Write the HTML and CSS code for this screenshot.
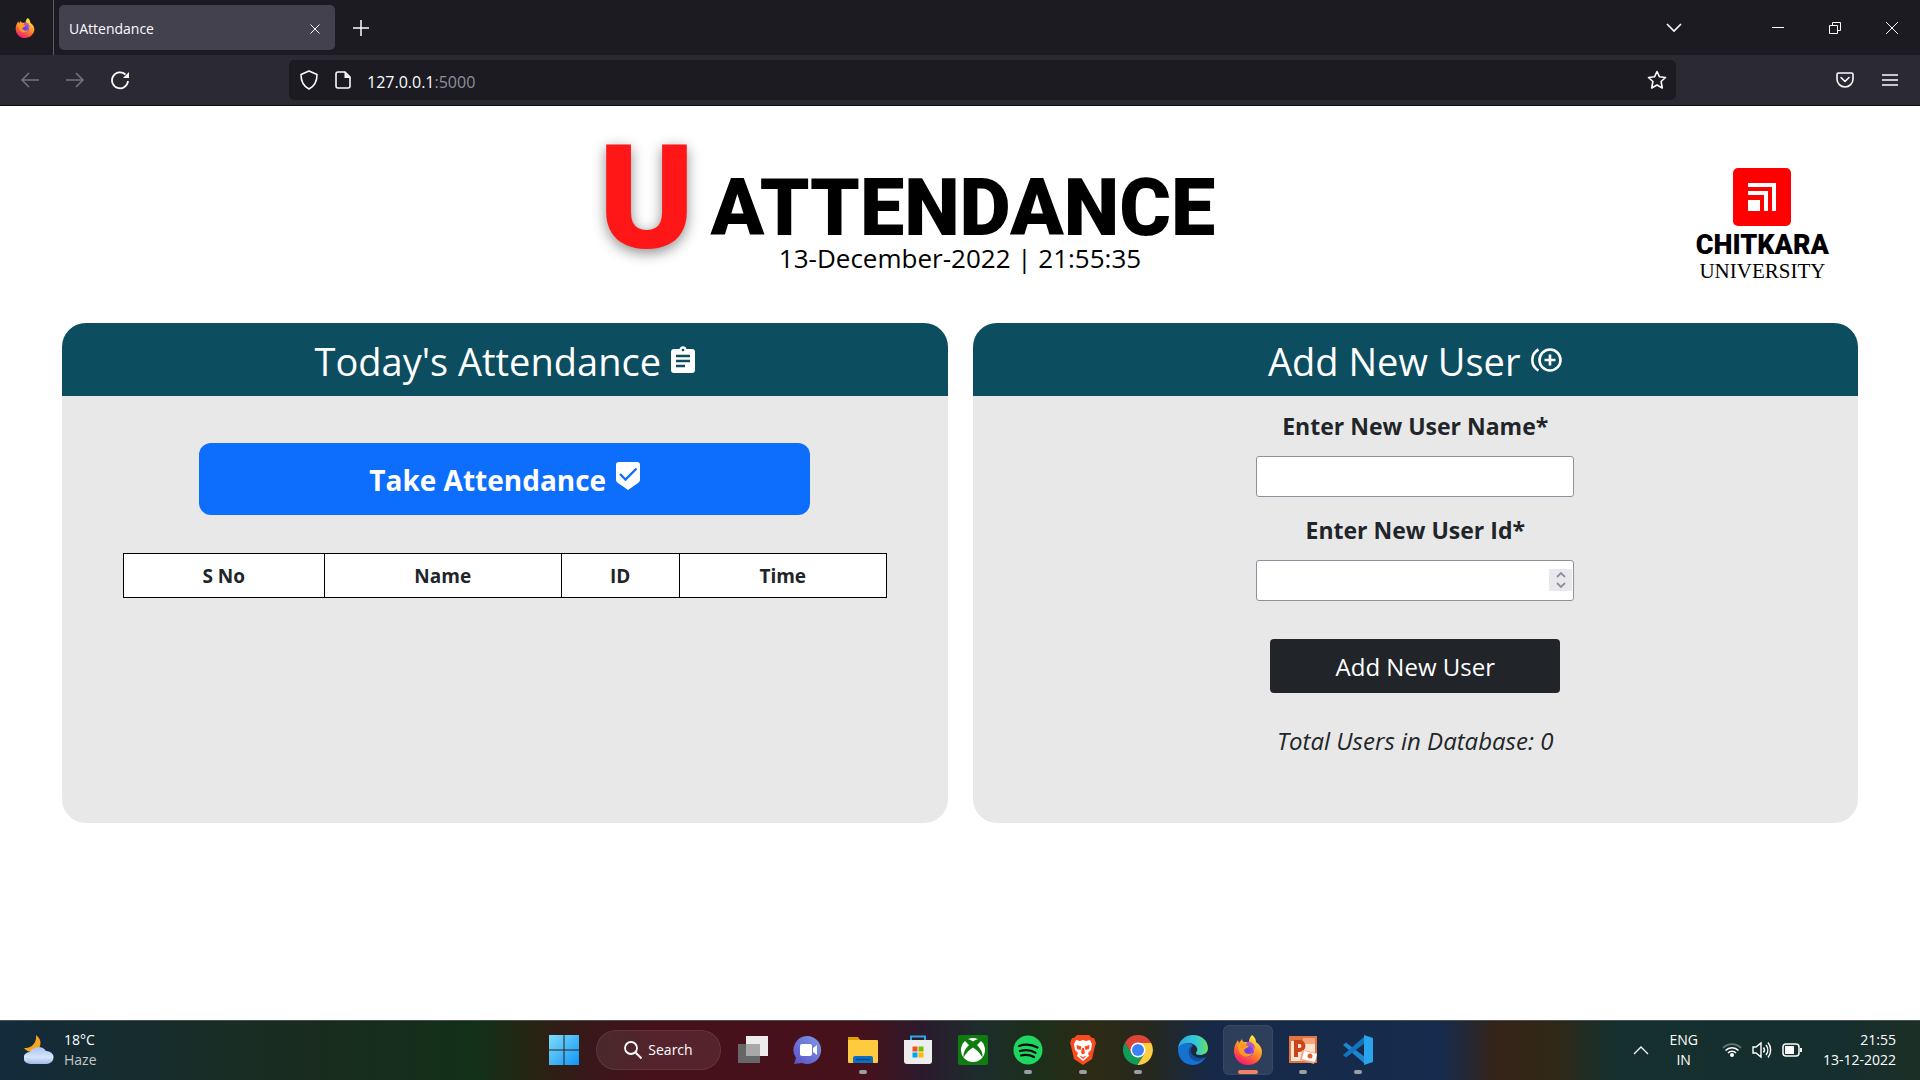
FILE: index.html
```html
<!DOCTYPE html>
<html lang="en">
<head>
<meta charset="utf-8">
<title>UAttendance</title>
<link rel="stylesheet" href="styles.css">
</head>
<body>
<svg class="defs" aria-hidden="true">
  <defs>
    <linearGradient id="fx-body" x1=".8" y1="0" x2=".3" y2="1"><stop offset="0" stop-color="#fff44f"/><stop offset=".35" stop-color="#ffb02e"/><stop offset=".65" stop-color="#ff6a2e"/><stop offset="1" stop-color="#f0137a"/></linearGradient>
    <radialGradient id="fx-globe"><stop offset="0" stop-color="#5b3fd6"/><stop offset="1" stop-color="#a04be8"/></radialGradient>
    <linearGradient id="win" x1="0" y1="0" x2="1" y2="1"><stop offset="0" stop-color="#7fdcfb"/><stop offset="1" stop-color="#0f96f5"/></linearGradient>
    <linearGradient id="cloud" x1="0" y1="0" x2="0" y2="1"><stop offset="0" stop-color="#a9c4f5"/><stop offset=".6" stop-color="#d7e4fb"/><stop offset="1" stop-color="#9db9ea"/></linearGradient>
    <linearGradient id="edge-a" x1="0" y1="0" x2="1" y2="0"><stop offset="0" stop-color="#2aa5e8"/><stop offset=".6" stop-color="#35c8d8"/><stop offset="1" stop-color="#6be05a"/></linearGradient>
    <linearGradient id="chat" x1="0" y1="1" x2="1" y2="0"><stop offset="0" stop-color="#5a4fc4"/><stop offset="1" stop-color="#7d9be8"/></linearGradient>
    <symbol id="firefox" viewBox="0 0 30 30">
      <path fill="url(#fx-body)" d="M19 0c3 2 4 5 4 7 4 3 6 6 6 10 0 7-6 13-14 13S1 24 1 16C1 11 3 8 5 5l1 3 3-4c0 2 1 3 3 3h4c0-3 1-5 3-7z"/>
      <circle cx="15" cy="16" r="6" fill="url(#fx-globe)"/>
      <path fill="#ff9a25" d="M4 10c3-2 6-2 8-1l4 1c0 3-4 3-5 5 0 4 5 5 9 3-2 5-12 5-14-2-1-3-1-4-2-6z"/>
      <path fill="#9b3fe0" d="M14 7c4-1 8 2 8 7-2-2-4-3-7-3l-2-1z" opacity=".75"/>
    </symbol>
  </defs>
</svg>

<header class="chrome">
  <div class="tabs">
    <div class="pinned"><svg width="20" height="20"><use href="#firefox"/></svg></div>
    <div class="tab"><span>UAttendance</span>
      <button class="icon-btn" aria-label="Close tab"><svg width="10" height="10" viewBox="0 0 10 10"><path d="M.5.5l9 9M9.500.5l-9 9"/></svg></button>
    </div>
    <button class="icon-btn new-tab" aria-label="New tab"><svg width="16" height="16" viewBox="0 0 16 16"><path d="M8 0v16M0 8h16" stroke-width="1.500"/></svg></button>
    <div class="window-buttons">
      <button class="icon-btn list-tabs" aria-label="List all tabs"><svg width="16" height="10" viewBox="0 0 16 10"><path d="M1 1l7 7 7-7" stroke-width="1.600"/></svg></button>
      <button class="icon-btn" aria-label="Minimize"><svg width="12" height="12" viewBox="0 0 12 12"><path d="M0 5.500h12"/></svg></button>
      <button class="icon-btn" aria-label="Restore"><svg width="12" height="12" viewBox="0 0 12 12"><path d="M.5 3.500h8v8h-8zM3.500 3V.5h8v8H9"/></svg></button>
      <button class="icon-btn" aria-label="Close"><svg width="14" height="14" viewBox="0 0 14 14"><path d="M1 1l12 12M13 1L1 13"/></svg></button>
    </div>
  </div>
  <div class="toolbar">
    <div class="nav">
      <button class="icon-btn dim" aria-label="Back"><svg width="18" height="16" viewBox="0 0 18 16"><path d="M18 8H1M8 1L1 8l7 7" stroke-width="1.500"/></svg></button>
      <button class="icon-btn dim" aria-label="Forward"><svg width="18" height="16" viewBox="0 0 18 16"><path d="M0 8h17M10 1l7 7-7 7" stroke-width="1.500"/></svg></button>
      <button class="icon-btn" aria-label="Reload"><svg width="20" height="20" viewBox="0 0 20 20"><path d="M15.500 4.500A8 8 0 1 0 18 11" stroke-width="1.800"/><path d="M19 2v6h-6z" fill="#fbfbfe" stroke="none"/></svg></button>
    </div>
    <div class="urlbar">
      <svg width="20" height="20" viewBox="0 0 20 20"><path d="M10 1l8 3.500c0 7-2 11.500-8 14.500C4 16 2 11.500 2 4.500z" stroke-width="1.600" stroke-linejoin="round"/></svg>
      <svg width="16" height="18" viewBox="0 0 16 18"><path d="M3 1h7l5 5v9a2 2 0 0 1-2 2H3a2 2 0 0 1-2-2V3a2 2 0 0 1 2-2z" stroke-width="1.600"/><path d="M9.500 1v6h6z" fill="#fbfbfe" stroke="none"/></svg>
      <span class="url">127.0.0.1<span class="port">:5000</span></span>
      <button class="icon-btn star" aria-label="Bookmark"><svg width="20" height="20" viewBox="0 0 20 20"><path d="M10 1.500l2.500 5.300 6 .7-4.400 4 1.200 6.500-5.300-3-5.300 3 1.200-6.500-4.400-4 6-.7z" stroke-width="1.600" stroke-linejoin="round"/></svg></button>
    </div>
    <div class="tools">
      <button class="icon-btn" aria-label="Pocket"><svg width="18" height="16" viewBox="0 0 18 16"><path d="M2.500 1h13A1.500 1.500 0 0 1 17 2.500V7a8 8 0 0 1-16 0V2.500A1.500 1.500 0 0 1 2.500 1zM5 5.500l4 4 4-4" stroke-width="1.600" stroke-linejoin="round" stroke-linecap="round"/></svg></button>
      <button class="icon-btn" aria-label="Menu"><svg width="16" height="14" viewBox="0 0 16 14"><path d="M0 2h16M0 7h16M0 12h16" stroke-width="1.600"/></svg></button>
    </div>
  </div>
</header>

<main class="page">
  <div class="masthead">
    <div class="brand">
      <h1 class="logo"><span class="logo-u">U</span><span class="logo-word">ATTENDANCE</span></h1>
      <p class="date">13-December-2022 | 21:55:35</p>
    </div>
    <div class="university">
      <svg width="58" height="58" viewBox="0 0 58 58"><rect width="58" height="58" rx="5" fill="#fe0000"/><g fill="#fff"><path d="M15 32h12v11H15zM15 23h20v20h-4V27H15zM15 15h28v28h-4V19H15z"/></g></svg>
      <span class="uni-name">CHITKARA</span>
      <span class="uni-kind">UNIVERSITY</span>
    </div>
  </div>

  <div class="cards">
    <section class="card">
      <h2>Today's Attendance
        <svg width="24" height="28" viewBox="0 0 24 28"><path fill="#fff" d="M3 3h5.500a3.600 3.600 0 0 1 7 0H21a3 3 0 0 1 3 3v18a3 3 0 0 1-3 3H3a3 3 0 0 1-3-3V6a3 3 0 0 1 3-3z"/><circle cx="12" cy="4" r="1.300" fill="#0c4d60"/><path d="M5 10h14M5 15h14M5 20h9" stroke="#0c4d60" stroke-width="2.500"/></svg>
      </h2>
      <div class="attendance">
        <button class="take">Take Attendance
          <svg width="24" height="28" viewBox="0 0 24 28"><path fill="#fff" d="M3 0h18a3 3 0 0 1 3 3v15a4 4 0 0 1-2 3l-10 7-10-7a4 4 0 0 1-2-3V3a3 3 0 0 1 3-3z"/><path d="M4 12l5.500 5.500L20.500 6.500" stroke="#0d6efd" stroke-width="2.300"/></svg>
        </button>
        <table>
          <colgroup><col class="c-no"><col class="c-name"><col class="c-id"><col class="c-time"></colgroup>
          <thead><tr><th>S No</th><th>Name</th><th>ID</th><th>Time</th></tr></thead>
        </table>
      </div>
    </section>

    <section class="card">
      <h2>Add New User
        <svg width="32" height="24" viewBox="0 0 32 24"><circle cx="20" cy="12" r="10.500" stroke="#fff" stroke-width="2.600"/><path d="M20 6.500v11M14.500 12h11M8.500 1.500a12 12 0 0 0 0 21" stroke="#fff" stroke-width="2.600"/></svg>
      </h2>
      <form class="new-user">
        <label for="username">Enter New User Name*</label>
        <input id="username" type="text">
        <label for="userid">Enter New User Id*</label>
        <div class="number">
          <input id="userid" type="number">
          <span class="spinner"><svg width="10" height="16" viewBox="0 0 10 16"><path d="M1 5l4-4 4 4M1 11l4 4 4-4" stroke="#8f8f9d" stroke-width="1.800"/></svg></span>
        </div>
        <button type="button">Add New User</button>
        <p>Total Users in Database: 0</p>
      </form>
    </section>
  </div>
</main>

<footer class="taskbar">
  <div class="weather">
    <svg width="30" height="30" viewBox="0 0 30 30"><path fill="#f7a51e" d="M12 0c6 4 6 12 0 16-4 2-9 1-12-3 7 1 13-5 12-13z"/><path fill="url(#cloud)" d="M7 29a7 6 0 0 1-1-12 9 8 0 0 1 16-1 7 6.500 0 0 1 1 13z"/></svg>
    <div><span>18°C</span><span class="muted">Haze</span></div>
  </div>
  <nav class="apps">
    <button class="app" aria-label="Start"><svg width="30" height="30" viewBox="0 0 30 30"><path fill="url(#win)" d="M0 0h14.500v14.500H0zM15.500 0H30v14.500H15.500zM0 15.500h14.500V30H0zM15.500 15.500H30V30H15.500z"/></svg></button>
    <button class="search"><svg width="18" height="18" viewBox="0 0 18 18"><circle cx="7" cy="7" r="6" stroke="#fff" stroke-width="1.800"/><path d="M11.500 11.500l6 6" stroke="#fff" stroke-width="2"/></svg>Search</button>
    <button class="app" aria-label="Task view"><svg width="30" height="30" viewBox="0 0 30 30"><path fill="#666" d="M0 9h22v19H0z"/><path fill="#ececec" d="M8 1h22v20H8z"/><path fill="#a8a8a8" d="M8 9h14v12H8z"/></svg></button>
    <button class="app" aria-label="Chat"><svg width="30" height="30" viewBox="0 0 30 30"><path fill="url(#chat)" d="M15 1a14 14 0 1 1-6 27l-8 1 2-6A14 14 0 0 1 15 1z"/><rect x="7" y="9" width="12" height="12" rx="2" fill="#fff"/><path fill="#fff" d="M20 13l4-3v10l-4-3z"/></svg></button>
    <button class="app open" aria-label="File Explorer"><svg width="30" height="30" viewBox="0 0 30 30"><path fill="#dfa100" d="M0 2h10l3 4v6H0z"/><rect y="5" width="30" height="23" rx="1" fill="#fdcb3d"/><path fill="#0d6fc4" d="M5 28v-5a2 2 0 0 1 2-2h16a2 2 0 0 1 2 2v5z"/><path stroke="#0a4a85" stroke-width="1.500" d="M8 24.500h14"/></svg></button>
    <button class="app" aria-label="Store"><svg width="30" height="30" viewBox="0 0 30 30"><path d="M8 6V1.500h14V6" stroke="#29a9e8" stroke-width="2"/><path fill="#ededed" d="M1 5h28v21a3 3 0 0 1-3 3H4a3 3 0 0 1-3-3z"/><path fill="#f25022" d="M9.500 11.500h5v5h-5z"/><path fill="#7fba00" d="M15.500 11.500h5v5h-5z"/><path fill="#00a4ef" d="M9.500 17.500h5v5h-5z"/><path fill="#ffb900" d="M15.500 17.500h5v5h-5z"/></svg></button>
    <button class="app" aria-label="Xbox"><svg width="30" height="30" viewBox="0 0 30 30"><rect width="30" height="30" rx="2" fill="#107c10"/><circle cx="15" cy="15" r="12" fill="#fff"/><path fill="#107c10" d="M6 5l3-1c2 0 4 1 6 2.500C17 5 19 4 21 4l3 1-5 5c4 4 6 8 5.500 12.500C22 18 19 15 15 12.500 11 15 8 18 5.500 22.500 5 18 7 14 11 10z"/></svg></button>
    <button class="app open" aria-label="Spotify"><svg width="30" height="30" viewBox="0 0 30 30"><circle cx="15" cy="15" r="14.500" fill="#1ed760"/><path d="M6 11c6-2 13-1.500 18.500 1.500M7 16c5-1.500 11-1 15.500 1.700M8 20.500c4-1 9-.7 13 1.500" stroke="#0b0b0b" stroke-width="2.300" stroke-linecap="round"/></svg></button>
    <button class="app open" aria-label="Brave"><svg width="30" height="30" viewBox="0 0 30 30"><path fill="#fb4a1f" d="M9 0h12l3 3h2l2 5-1 3-3 13-9 6-9-6L3 11 2 8l2-5h2z"/><path fill="#fff" d="M15 5l3 1 4-1 2 4-1 6-3 3 1 3-6 5-6-5 1-3-3-3-1-6 2-4 4 1z"/><path fill="#fb4a1f" d="M8.500 10l5 1.500L12.500 15 9 14zM21.500 10l-5 1.500 1 3.500 3.500-1zM14 13h2l1 5-2 1.500-2-1.500zM11 20.500l4 1.500 4-1.500-4 3.500z"/></svg></button>
    <button class="app open" aria-label="Chrome"><svg width="30" height="30" viewBox="0 0 30 30"><path fill="#db4437" d="M2 7.500a15 15 0 0 1 26 0V8H15l-6.500 11z"/><path fill="#0f9d58" d="M2 7.500a15 15 0 0 0 12.500 22.500L21 19l-12.500 0z"/><path fill="#ffcd40" d="M28.200 8a15 15 0 0 1-13.700 22L21.500 18.500 15 8z"/><circle cx="15" cy="15" r="7.500" fill="#fff"/><circle cx="15" cy="15" r="6" fill="#3b82f6"/></svg></button>
    <button class="app" aria-label="Edge"><svg width="30" height="30" viewBox="0 0 30 30"><path fill="#1573cf" d="M0 15c1-5 5-7 9-7 3 0 5 1 6 3-4 1-5 5-3 9 3 5 10 5 16 2-3 5-8 8-13 8C7 30 0 24 0 15z"/><path fill="url(#edge-a)" d="M0 15C0 6 7 0 15 0c9 0 15 6 15 13 0 5-4 7-8 7-3 0-4-1-4-2s2-2 1-5c-1-3-5-5-9-5C5 8 1 10 0 15z"/><path fill="#0f4f9e" d="M12 12c-3 5-1 12 5 14 4 1 8-1 11-4-5 2-11 1-14-3-2-3-1-5 0-7z"/></svg></button>
    <button class="app open current" aria-label="Firefox"><svg width="30" height="30"><use href="#firefox"/></svg></button>
    <button class="app open" aria-label="PowerPoint"><svg width="30" height="30" viewBox="0 0 30 30"><path fill="#e3743f" d="M1 1h28v27H1z"/><path fill="#fbe3d2" d="M3 6h24v20H3z"/><path fill="#f3a67c" d="M15 3h12v6H15z"/><path d="M8 22V7h3.500a3.500 3.500 0 0 1 0 8H8" stroke="#c8441b" stroke-width="4"/><path fill="#f0a680" d="M14 15l15 3-3 11-14-4z"/><path fill="#fff" d="M16 16l13 3-2 8-13-3z"/><circle cx="22" cy="21" r="2.500" fill="#e06030"/></svg></button>
    <button class="app open" aria-label="Visual Studio Code"><svg width="30" height="30" viewBox="0 0 30 30"><path fill="#1c86cf" d="M0 10l3-2.500L22 22v7z"/><path fill="#1474bb" d="M0 20l3 2.500L22 8V1z"/><path fill="#2ba4ee" d="M21 0l9 3v24l-9 3z"/></svg></button>
  </nav>
  <div class="tray">
    <button class="icon-btn" aria-label="Show hidden icons"><svg width="16" height="10" viewBox="0 0 16 10"><path d="M1 9l7-7 7 7" stroke-width="1.300"/></svg></button>
    <div class="lang"><span>ENG</span><span>IN</span></div>
    <div class="status">
      <svg width="20" height="16" viewBox="0 0 20 16"><path d="M1 6a12.500 12.500 0 0 1 18 0" stroke="#fff" stroke-opacity=".35" stroke-width="1.600"/><path d="M3.500 8.500a9 9 0 0 1 13 0M6 11a5.500 5.500 0 0 1 8 0" stroke="#fff" stroke-width="1.600"/><circle cx="10" cy="13" r="2" fill="#fff"/></svg>
      <svg width="20" height="18" viewBox="0 0 20 18"><path d="M1 6h3l5-4v14l-5-4H1zM11.500 6.500a4 4 0 0 1 0 5M14 4a8 8 0 0 1 0 10M16 1.500a12 12 0 0 1 0 15" stroke="#fff" stroke-width="1.400"/></svg>
      <svg width="20" height="14" viewBox="0 0 20 14"><rect x="1" y="1" width="16" height="12" rx="3" stroke="#fff" stroke-width="1.500"/><path fill="#fff" d="M3 3h9v8H3zM18 5h2v4h-2z"/></svg>
    </div>
    <div class="clock"><span>21:55</span><span>13-12-2022</span></div>
  </div>
</footer>
</body>
</html>
```
FILE: styles.css
```css
* { box-sizing: border-box; }

body {
  margin: 0;
  min-height: 100vh;
  display: flex;
  flex-direction: column;
  background: #fff;
  color: #212529;
  font-family: "Open Sans", "Noto Sans", sans-serif;
}

h1, h2, p { margin: 0; font-weight: 400; }
button, input { font-family: inherit; }
svg { display: block; fill: none; flex: none; }
.defs { position: absolute; width: 0; height: 0; }

.icon-btn {
  display: flex;
  align-items: center;
  justify-content: center;
  padding: 0;
  border: 0;
  background: none;
}
.icon-btn svg, .urlbar svg { stroke: #fbfbfe; }
.dim svg { stroke: #77767e; }

/* Browser window */
.chrome { color: #fbfbfe; background: #2b2a33; border-bottom: 1px solid #0c0c0d; }
.tabs {
  display: flex;
  align-items: center;
  height: 55px;
  background: #1c1b22;
}
.pinned {
  display: flex;
  align-items: center;
  justify-content: center;
  align-self: stretch;
  width: 54px;
  padding-right: 4px;
  border-right: 1px solid #5b5b66;
}
.tab {
  display: flex;
  align-items: center;
  justify-content: space-between;
  width: 276px;
  height: 45px;
  margin-left: 5px;
  padding: 2px 15px 0 10px;
  border-radius: 5px;
  background: #42414d;
  font-size: 14px;
}
.new-tab { width: 52px; height: 45px; }
.window-buttons { display: flex; margin-left: auto; }
.window-buttons .icon-btn { width: 57px; height: 54px; }
.window-buttons .list-tabs { margin-right: 47px; }

.toolbar { display: flex; align-items: center; height: 50px; padding: 0 8px 0 7px; }
.nav { display: flex; width: 282px; }
.nav .icon-btn { width: 45px; height: 40px; }
.urlbar {
  display: flex;
  align-items: center;
  flex: 1;
  gap: 16px;
  height: 40px;
  padding: 0 9px 0 10px;
  border-radius: 5px;
  background: #1c1b22;
}
.url { padding-top: 3px; font-size: 16px; }
.port { color: #8f8f9d; }
.star { margin-left: auto; }
.tools { display: flex; justify-content: flex-end; width: 236px; }
.tools .icon-btn { width: 45px; height: 40px; }

/* Page */
.page { flex: 1; padding: 0 62px 40px; }
.masthead {
  display: grid;
  grid-template-columns: 1fr auto 1fr;
  height: 217px;
}
.brand { grid-column: 2; display: flex; flex-direction: column; align-items: center; }
.logo {
  display: flex;
  align-items: flex-start;
  gap: 16px;
  height: 132px;
  margin-right: 106px;
}
.logo-u {
  color: #ff1616;
  font: 900 144px/186px Roboto, sans-serif;
  text-shadow: 0 4px 14px rgba(0, 0, 0, .45);
}
.logo-word { color: #000; font: 900 79px/204px Roboto, sans-serif; }
.date { color: #000; font-size: 26px; line-height: 40px; }
.university {
  display: flex;
  flex-direction: column;
  align-items: center;
  justify-self: end;
  padding: 62px 29px 0 0;
  color: #000;
}
.uni-name {
  margin-top: 4px;
  font: 900 27px/30px Roboto, sans-serif;
}
.uni-kind { font: 21px/22px "Liberation Serif", serif; }

.cards { display: grid; grid-template-columns: 1fr 1fr; gap: 25px; }
.card {
  height: 500px;
  overflow: hidden;
  border-radius: 24px;
  background: #e8e8e8;
}
.card h2 {
  display: flex;
  align-items: center;
  justify-content: center;
  gap: 10px;
  height: 73px;
  padding-top: 3px;
  background: #0c4d60;
  color: #fff;
  font-size: 38px;
  line-height: 48px;
}
.card h2 svg { margin-bottom: 3px; }

.attendance {
  display: flex;
  flex-direction: column;
  align-items: center;
  gap: 38px;
  padding: 47px 61px;
}
.take {
  display: flex;
  align-items: center;
  justify-content: center;
  gap: 10px;
  width: 80%;
  height: 72px;
  padding: 2px 0 0;
  border: 0;
  border-radius: 12px;
  background: #0d6efd;
  color: #fff;
  font-size: 28px;
  font-weight: 700;
}
.take svg { margin-bottom: 8px; }
table {
  width: 100%;
  table-layout: fixed;
  border-collapse: collapse;
  background: #fff;
  font-size: 19px;
}
.c-no { width: 201px; }
.c-name { width: 237px; }
.c-id { width: 118px; }
.c-time { width: 207px; }
th { height: 44px; padding: 0; border: 1px solid #000; }

.new-user { display: flex; flex-direction: column; align-items: center; }
.new-user label { margin-top: 12px; font-size: 23px; font-weight: 700; line-height: 36px; }
.new-user input {
  display: block;
  width: 318px;
  height: 41px;
  margin: 12px 0 3px;
  padding: 2px 8px;
  border: 1px solid #8f8f9d;
  border-radius: 3px;
  background: #fff;
  font-size: 24px;
  appearance: textfield;
}
.number { position: relative; }
.spinner {
  position: absolute;
  right: 2px;
  top: 21px;
  display: flex;
  align-items: center;
  justify-content: center;
  width: 23px;
  height: 22px;
  background: #e9e9ed;
}
.new-user button {
  width: 290px;
  height: 54px;
  margin: 35px 0 28px;
  border: 0;
  border-radius: 4px;
  background: #212529;
  color: #fff;
  font-size: 24px;
}
.new-user p { font-size: 24px; font-style: italic; line-height: 40px; }

/* Desktop taskbar */
.taskbar {
  display: grid;
  grid-template-columns: 1fr auto 1fr;
  align-items: center;
  height: 60px;
  padding: 0 24px 2px;
  border-top: 1px solid #4a5250;
  color: #fff;
  font-size: 14px;
  line-height: 20px;
  background: linear-gradient(90deg, #132b3b 0%, #182d26 11%, #192c1f 16%, #133018 25%, #2a2313 28%, #3a161a 31%, #46111b 34%, #46111b 45%, #2b1a2c 48%, #1d2c2c 51%, #1c2f1a 54%, #2d2a15 57%, #25281f 60%, #162948 63%, #162b4d 75%, #352317 78%, #302816 81%, #15302e 84%, #152e2e 96%, #1c2f26 100%);
}
.weather { display: flex; align-items: center; gap: 10px; }
.weather span, .lang span, .clock span { display: block; }
.muted { color: #c3c9c7; }
.apps { display: flex; align-items: center; gap: 5px; padding-left: 2px; }
.app {
  position: relative;
  display: flex;
  align-items: center;
  justify-content: center;
  width: 50px;
  height: 50px;
  padding: 0;
  border: 0;
  border-radius: 6px;
  background: none;
}
.open::after {
  content: "";
  position: absolute;
  bottom: 1px;
  left: 21px;
  width: 8px;
  height: 4px;
  border-radius: 2px;
  background: #9a9fa6;
}
.current { background: rgba(255, 255, 255, .1); box-shadow: inset 0 0 0 1px rgba(255, 255, 255, .06); }
.current::after { left: 15px; width: 20px; background: #f58069; }
.search {
  display: flex;
  align-items: center;
  justify-content: center;
  gap: 6px;
  width: 125px;
  height: 40px;
  margin: 0 2px;
  border: 1px solid rgba(255, 255, 255, .08);
  border-radius: 20px;
  background: rgba(255, 255, 255, .08);
  color: #fff;
  font-size: 14px;
}
.tray { display: flex; align-items: center; justify-content: flex-end; }
.lang { margin: 0 24px 0 20px; text-align: center; }
.status { display: flex; align-items: center; gap: 10px; margin-right: 21px; }
.clock { text-align: right; }
```
